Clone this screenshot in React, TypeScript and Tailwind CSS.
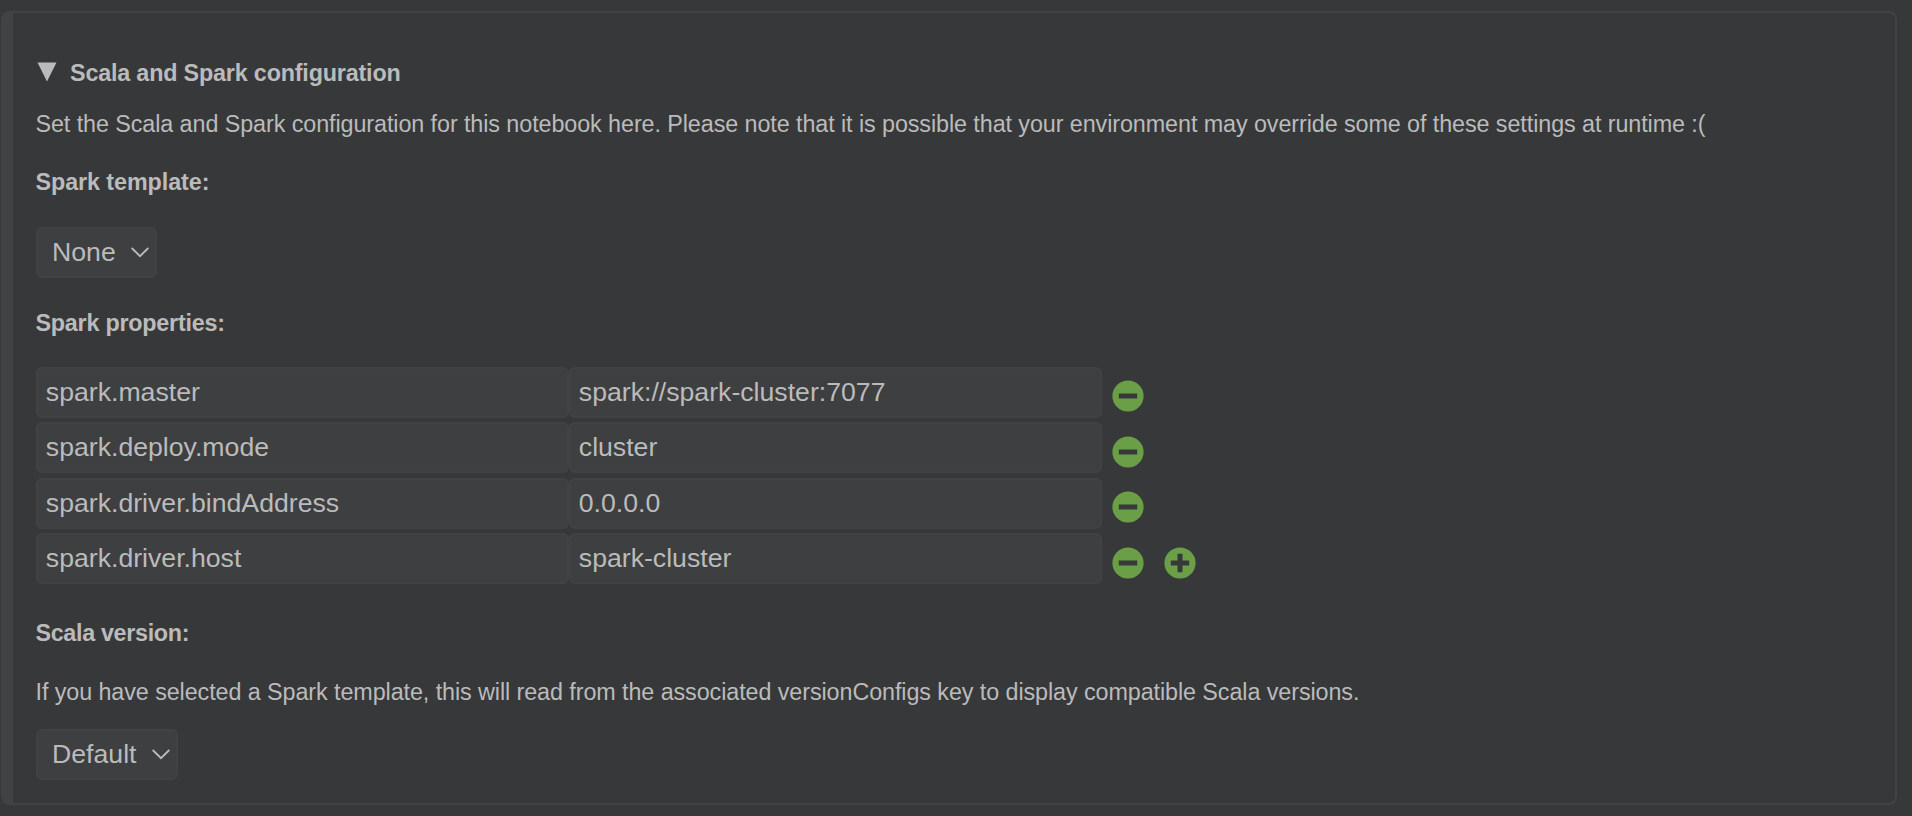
import React, { useState } from "react";

const initialProperties = [
  { name: "spark.master", value: "spark://spark-cluster:7077" },
  { name: "spark.deploy.mode", value: "cluster" },
  { name: "spark.driver.bindAddress", value: "0.0.0.0" },
  { name: "spark.driver.host", value: "spark-cluster" },
];

const rowSpacing = ["", "mt-1", "mt-[5px]", "mt-1"];
const iconSpacing = ["mt-[7px]", "mt-[9px]", "mt-[7px]", "mt-[9px]"];

function RoundIcon({ plus = false }: { plus?: boolean }) {
  return (
    <svg viewBox="0 0 32 32" className="block size-8">
      <circle cx="16" cy="16" r="15.6" fill="#6a9f48" />
      <path d={plus ? "M6.8 16h18.4M16 6.8v18.4" : "M6.8 16h18.4"} stroke="#37383a" strokeWidth="5" />
    </svg>
  );
}

function Dropdown({ label, className }: { label: string; className: string }) {
  return (
    <button
      className={`flex h-[51px] items-center justify-between rounded-md border-2 border-[#414244] bg-[#3e3f41] pr-[6px] pl-[14px] text-[26.67px] leading-[44px] ${className}`}
    >
      <span className="-mt-px whitespace-nowrap">{label}</span>
      <svg viewBox="0 0 18 12" className="mt-px h-3 w-[18px]" fill="none" stroke="#bbbbbb" strokeWidth="1.8">
        <path d="M1.2 1.5 9 9.2 16.8 1.5" strokeLinecap="round" />
      </svg>
    </button>
  );
}

const field =
  "h-[51px] rounded-md border-2 border-[#414244] bg-[#3e3f41] px-[7.8px] pb-px text-[26.67px] outline-none";

export default function App() {
  const [properties] = useState(initialProperties);
  return (
    <main className="h-[816px] bg-[#37383a] pt-[11px] pl-px font-['Liberation_Sans',Arial,sans-serif] text-[23.33px] leading-7 text-[#bbbbbb]">
      <section className="flex h-[794px] w-[1896px] flex-col items-start rounded-lg border-2 border-l-12 border-[#414244] pl-[23px]">
        <h2 className="mt-[46px] flex items-center font-bold tracking-[-0.18px]">
          <svg viewBox="0 0 20 20" className="-mt-[3px] mr-[13px] ml-px size-5" fill="#bbbbbb">
            <path d="M0.5 0.5h19L10 19.5z" />
          </svg>
          Scala and Spark configuration
        </h2>
        <p className="mt-[23px] -ml-[0.5px] tracking-[-0.08px] whitespace-nowrap">
          Set the Scala and Spark configuration for this notebook here. Please note that it is possible that your environment may override some of these settings at runtime :(
        </p>
        <h3 className="mt-[30px] -ml-[0.5px] font-bold tracking-[-0.08px]">Spark template:</h3>
        <Dropdown label="None" className="mt-[31px] w-[121px]" />
        <h3 className="mt-[31px] -ml-[0.5px] font-bold tracking-[-0.23px]">Spark properties:</h3>
        <div className="mt-[30px] flex flex-col">
          {properties.map((p, i) => (
            <div key={p.name} className={`flex h-[51px] items-center ${rowSpacing[i]}`}>
              <input className={`${field} w-[533px]`} defaultValue={p.name} />
              <input className={`${field} w-[533px]`} defaultValue={p.value} />
              <button className={`ml-[10px] ${iconSpacing[i]}`}>
                <RoundIcon />
              </button>
              {i === properties.length - 1 && (
                <button className={`ml-5 ${iconSpacing[i]}`}>
                  <RoundIcon plus />
                </button>
              )}
            </div>
          ))}
        </div>
        <h3 className="mt-[35px] -ml-[0.5px] font-bold tracking-[-0.33px]">Scala version:</h3>
        <p className="mt-[31px] -ml-[0.5px] tracking-[-0.08px] whitespace-nowrap">
          If you have selected a Spark template, this will read from the associated versionConfigs key to display compatible Scala versions.
        </p>
        <Dropdown label="Default" className="mt-[23px] w-[142px]" />
      </section>
    </main>
  );
}
